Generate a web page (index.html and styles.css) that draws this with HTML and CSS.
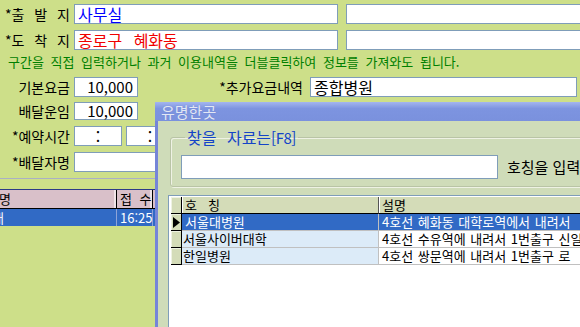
FILE: index.html
```html
<!DOCTYPE html>
<html lang="ko">
<head>
    <meta charset="UTF-8">
    <title>배달 접수</title>
    <link rel="stylesheet" href="styles.css">
</head>
<body>
<div class="screen">

    <!-- 접수 입력 폼 -->
    <div class="form">
        <div class="row">
            <span class="label spaced">*출 발 지</span>
            <span class="field addr blue">사무실</span>
            <span class="field addr2"></span>
        </div>
        <div class="row">
            <span class="label spaced">*도 착 지</span>
            <span class="field addr red">종로구 혜화동</span>
            <span class="field addr2"></span>
        </div>
        <p class="hint">구간을 직접 입력하거나 과거 이용내역을 더블클릭하여 정보를 가져와도 됩니다.</p>
        <div class="row">
            <span class="label">기본요금</span>
            <span class="field money">10,000</span>
            <span class="label extra-label">*추가요금내역</span>
            <span class="field extra">종합병원</span>
        </div>
        <div class="row short">
            <span class="label">배달운임</span>
            <span class="field money">10,000</span>
        </div>
        <div class="row">
            <span class="label">*예약시간</span>
            <span class="field time">:</span>
            <span class="field time">:</span>
        </div>
        <div class="row">
            <span class="label">*배달자명</span>
            <span class="field person"></span>
        </div>
    </div>

    <!-- 과거 이용내역 -->
    <div class="history">
        <div class="history-head">
            <span class="hcell c-name">성명</span>
            <span class="hcell c-time">접 수</span>
            <span class="hcell c-rest"></span>
        </div>
        <div class="history-row selected">
            <span class="dcell c-name">대</span>
            <span class="dcell c-time">16:25</span>
            <span class="dcell c-rest"></span>
        </div>
    </div>

    <!-- 유명한곳 대화상자 -->
    <div class="dialog">
        <div class="titlebar">유명한곳</div>
        <div class="dialog-body">
            <fieldset class="search">
                <legend>찾을 자료는<span class="key">[F8]</span></legend>
                <span class="search-input"></span>
                <span class="search-tip">호칭을 입력하세요</span>
            </fieldset>

            <div class="grid">
                <span class="ind"></span>
                <span class="gh g-name">호&nbsp;&nbsp;&nbsp;칭</span>
                <span class="gh g-desc">설명</span>

                <span class="ind"><svg width="7" height="11" viewBox="0 0 7 11"><path d="M0 0 L7 5.5 L0 11 Z" fill="#000"/></svg></span>
                <span class="gd g-name sel">서울대병원</span>
                <span class="gd g-desc sel">4호선 혜화동 대학로역에서 내려서</span>

                <span class="ind"></span>
                <span class="gd g-name">서울사이버대학</span>
                <span class="gd g-desc">4호선 수유역에 내려서 1번출구 신일</span>

                <span class="ind"></span>
                <span class="gd g-name">한일병원</span>
                <span class="gd g-desc">4호선 쌍문역에 내려서 1번출구 로</span>
            </div>
        </div>
    </div>

</div>
</body>
</html>
```

FILE: styles.css
```css
body {
    margin: 0;
    font-family: "Noto Sans CJK KR", sans-serif;
}

.screen {
    position: relative;
    width: 580px;
    height: 327px;
    overflow: hidden;
    background-color: #cddf89;
}

/* form */
.form {
    padding-top: 4px;
}

.row {
    display: flex;
    align-items: center;
    height: 20px;
    margin-bottom: 6px;
}

.row.short {
    height: 18px;
    margin-top: -1px;
}

.label {
    width: 74px;
    flex-shrink: 0;
    box-sizing: border-box;
    padding-right: 4px;
    text-align: right;
    font-size: 14px;
    line-height: 18px;
    color: #000;
    white-space: nowrap;
}

.label.spaced {
    word-spacing: 6px;
}

.field {
    box-sizing: border-box;
    flex-shrink: 0;
    height: 100%;
    padding: 0 3px;
    border: 1px solid #7f9db9;
    background-color: #fff;
    font-size: 16px;
    line-height: 18px;
    word-spacing: 7px;
    white-space: nowrap;
}

.row.short .field { line-height: 16px; }

.field.addr { width: 264px; margin-right: 8px; }
.field.addr2 { width: 260px; }
.blue { color: #0000ff; }
.red { color: #f00000; }

.field.money {
    width: 64px;
    text-align: right;
    padding-right: 4px;
    font-size: 15px;
}

.extra-label {
    width: 172px;
    padding-right: 7px;
}

.field.extra { width: 267px; }

.field.time {
    width: 48px;
    margin-right: 4px;
    text-align: center;
}

.field.person { width: 200px; }

.hint {
    margin: -6px 0 0;
    padding: 2px 0 0 8px;
    height: 25px;
    font-size: 13px;
    line-height: 19px;
    word-spacing: 3px;
    color: #008000;
    white-space: nowrap;
}

/* history list */
.history {
    border-top: 1px solid #aab0c4;
    padding-top: 10px;
}

.history-head,
.history-row {
    display: flex;
    font-size: 13px;
    white-space: nowrap;
}

.history-head {
    height: 18px;
    border-top: 1px solid #2c3a86;
    border-bottom: 1px solid #000;
    background-color: #d9c0c9;
    line-height: 18px;
}

.history-row {
    height: 17px;
    line-height: 17px;
    background-color: #fff;
}

.history-row.selected {
    background-color: #316ac5;
    color: #fff;
}

.hcell, .dcell {
    box-sizing: border-box;
}

.hcell { border-right: 1px solid #000; box-shadow: inset -2px 0 0 #f0e4e8; }
.dcell { border-right: 1px solid #8ea4d8; }

/* the list is scrolled a little to the right */
.c-name { width: 117px; text-indent: -13px; overflow: hidden; }
.dcell.c-name { text-indent: -8px; }
.c-time { width: 36px; padding-left: 3px; word-spacing: 4px; }
.c-rest { flex: 1; border-right: none; box-shadow: none; }

/* dialog */
.dialog {
    position: absolute;
    left: 155px;
    top: 102px;
    width: 440px;
    height: 240px;
    border-left: 3px solid #7585d8;
    background-color: #cfdcb9;
}

.titlebar {
    height: 19px;
    padding-left: 6px;
    margin-left: -3px;
    background: linear-gradient(#a4b6ef, #7d94e0 35%, #7a91dd);
    color: #e2e7f5;
    font-size: 15px;
    line-height: 19px;
    text-shadow: 0 0 1px #6a80cc;
}

.dialog-body {
    padding: 8px 0 0 12px;
}

.search {
    margin: 0;
    padding: 9px 0 7px 10px;
    border: 1px solid #b9c4a6;
    border-radius: 3px;
    box-shadow: inset 1px 1px 0 #eef2e4, 1px 1px 0 #eef2e4;
    display: flex;
    align-items: center;
}

.search legend {
    margin-left: 4px;
    padding: 0 2px;
    font-size: 16px;
    line-height: 16px;
    word-spacing: 6px;
    color: #1444c8;
}

.search legend .key {
    font-size: 15px;
    letter-spacing: -0.5px;
}

.search-input {
    box-sizing: border-box;
    width: 317px;
    height: 24px;
    flex-shrink: 0;
    border: 1px solid #7f9db9;
    background-color: #fff;
}

.search-tip {
    margin-left: 9px;
    font-size: 15px;
    line-height: 18px;
    white-space: nowrap;
}

.grid {
    margin: 8px 0 0 -2px;
    height: 200px;
    padding: 1px 0 0 2px;
    border: 1px solid #7f9db9;
    background-color: #fff;
    display: grid;
    grid-template-columns: 11px 197px 240px;
    grid-auto-rows: 17px;
    align-content: start;
    font-size: 13px;
    line-height: 16px;
    white-space: nowrap;
}

.grid > span {
    box-sizing: border-box;
}

.ind {
    background-color: #d4dcb8;
    border-right: 1px solid #000;
    border-bottom: 1px solid #000;
    box-shadow: inset 1px 1px 0 #eef2e2;
    display: flex;
    align-items: center;
    padding-left: 2px;
}

.gh {
    background-color: #d4dcb8;
    border-bottom: 1px solid #000;
    border-right: 1px solid #555;
    box-shadow: inset 1px 0 0 #fff;
    padding-left: 3px;
}

.gd {
    padding-left: 3px;
    border-right: 1px solid #c0c0c0;
    border-bottom: 1px solid #c0c0c0;
    word-spacing: 1px;
}

.gd.g-name { background-color: #dcebf8; padding-left: 1px; }
.gd.g-name.sel { padding-left: 3px; }
.gd.sel { background-color: #316ac5; color: #fff; }
```
